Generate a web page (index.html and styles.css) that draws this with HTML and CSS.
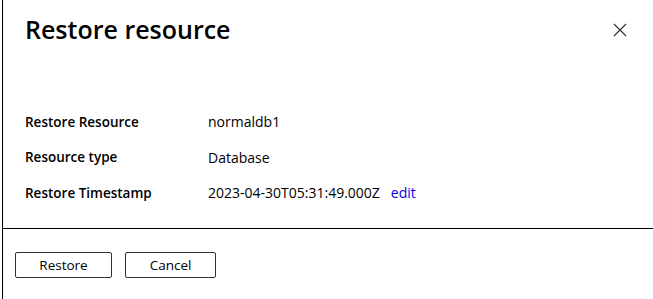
FILE: index.html
```html
<!doctype html>
<html>
<head>
<meta charset="utf-8">
<title>Restore resource</title>
<link rel="stylesheet" href="styles.css">
</head>
<body>
<div class="panel">
	<div class="head">
		<h1 class="title">Restore resource</h1>
		<a href="javascript:;" class="close">
			<svg width="14" height="14" viewBox="0 0 14 14"><path d="M1 1L13 13M13 1L1 13" stroke="#333" stroke-width="1.2" fill="none"/></svg>
		</a>
	</div>
	<div class="info">
		<div class="row"><span class="lab">Restore Resource</span><span class="val">normaldb1</span></div>
		<div class="row"><span class="lab">Resource type</span><span class="val">Database</span></div>
		<div class="row"><span class="lab">Restore Timestamp</span><span class="val">2023-04-30T05:31:49.000Z<a href="javascript:;" class="edit">edit</a></span></div>
	</div>
	<div class="foot">
		<a href="javascript:;" class="btn restore">Restore</a>
		<a href="javascript:;" class="btn cancel">Cancel</a>
	</div>
</div>
</body>
</html>
```

FILE: styles.css
```css
*{margin:0; padding:0;}
html,body{height:100%;}
body{background:#fff; font-family:"Open Sans","Noto Sans",sans-serif; color:#000;}
.panel{height:100%; margin-left:2px; border-left:1px solid #000; display:flex; flex-direction:column;}
.head{display:flex; justify-content:space-between; align-items:center; padding:8px 26px 0 22px; height:42px;}
.title{font-size:25px; font-weight:600;}
.close{display:block; width:14px; height:14px; margin-top:2px;}
.close svg{display:block;}
.info{padding:54px 0 0 22px; height:124px;}
.row{display:flex; height:35.5px; align-items:center; font-size:13.5px;}
.lab{width:183px; font-weight:600;}
.val{font-size:14px;}
.edit{color:#0000ee; text-decoration:none; margin-left:11px;}
.foot{border-top:1px solid #000; display:flex; gap:13px; padding:23px 0 0 12px;}
.btn{display:block; height:24px; line-height:24px; border:1px solid #333; border-radius:2px; text-align:center; color:#000; text-decoration:none; font-size:13.5px;}
.restore{width:95px;}
.cancel{width:89px;}
```
